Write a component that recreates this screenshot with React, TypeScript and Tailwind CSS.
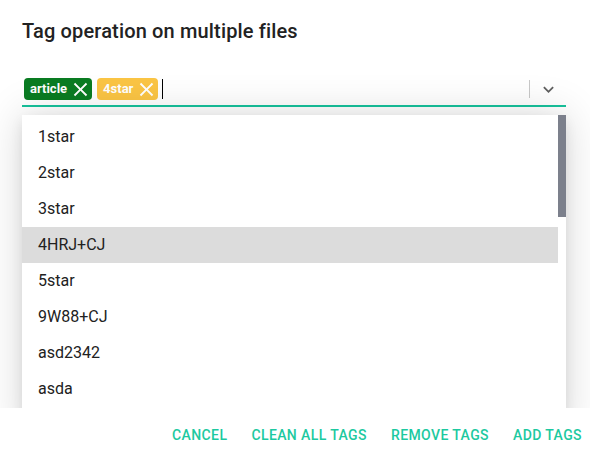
import { useState } from 'react'

const TAGS = [
  { label: 'article', className: 'bg-[#0a7c22]' },
  { label: '4star', className: 'bg-[#fbc544]' },
]

const OPTIONS = ['1star', '2star', '3star', '4HRJ+CJ', '5star', '9W88+CJ', 'asd2342', 'asda', 'blue']

const ACTIONS = ['Cancel', 'Clean all tags', 'Remove tags', 'Add tags']

function CloseIcon() {
  return (
    <svg viewBox="0 0 24 24" width={23} height={23} className="-my-[2px] shrink-0 fill-white">
      <path d="M19 6.41 17.59 5 12 10.59 6.41 5 5 6.41 10.59 12 5 17.59 6.41 19 12 13.41 17.59 19 19 17.59 13.41 12z" />
    </svg>
  )
}

export default function App() {
  const [active] = useState('4HRJ+CJ')

  return (
    <div className="relative flex h-[458px] w-[590px] flex-col overflow-hidden bg-white font-['Roboto',sans-serif] text-[#212121]">
      <div className="px-[22px] pt-[15px] text-[20px] font-medium leading-[32px] tracking-[0.15px] text-[#222]">
        Tag operation on multiple files
      </div>

      <div className="relative ml-[22px] mt-[27px] w-[544px]">
        <div className="flex items-center border-b-2 border-[#17c29c] pb-[5px] pl-[2px] pt-[4px]">
          <div className="flex flex-1 items-center gap-[5px]">
            {TAGS.map((tag) => (
              <div
                key={tag.label}
                className={`flex h-[22px] items-center rounded-[4px] pl-[6px] text-[13px] font-bold text-white ${tag.className}`}
              >
                <span className="mr-[2px]">{tag.label}</span>
                <CloseIcon />
              </div>
            ))}
            <div className="ml-[-1px] h-[20px] w-px bg-black" />
          </div>
          <div className="h-[18px] w-px bg-[#c8c8c8]" />
          <svg viewBox="0 0 24 24" width={21} height={21} className="ml-[8px] mr-[7px] fill-[#5f5f5f]">
            <path d="M16.59 8.59 12 13.17 7.41 8.59 6 10l6 6 6-6z" />
          </svg>
        </div>

        <div className="absolute left-0 right-0 top-[calc(100%+8px)] z-0 flex h-[320px] overflow-hidden bg-white shadow-[0_0_40px_rgba(0,0,0,0.16),0_6px_12px_rgba(0,0,0,0.08)]">
          <ul className="flex-1 pt-[4px]">
            {OPTIONS.map((option) => (
              <li
                key={option}
                className={`flex h-[36px] items-center px-[16px] text-[16px] ${option === active ? 'bg-[#dcdcdc]' : ''}`}
              >
                {option}
              </li>
            ))}
          </ul>
          <div className="w-[8px]">
            <div className="h-[102px] bg-[#7c808c]" />
          </div>
        </div>
      </div>

      <div className="flex-1" />

      <div className="relative z-10 flex h-[50px] items-center justify-end gap-[8px] bg-white pt-[4px]">
        {ACTIONS.map((action) => (
          <button
            key={action}
            type="button"
            className="px-[8px] py-[6px] text-[14px] font-medium uppercase tracking-[0.4px] text-[#1dc9a0]"
          >
            {action}
          </button>
        ))}
      </div>
    </div>
  )
}
